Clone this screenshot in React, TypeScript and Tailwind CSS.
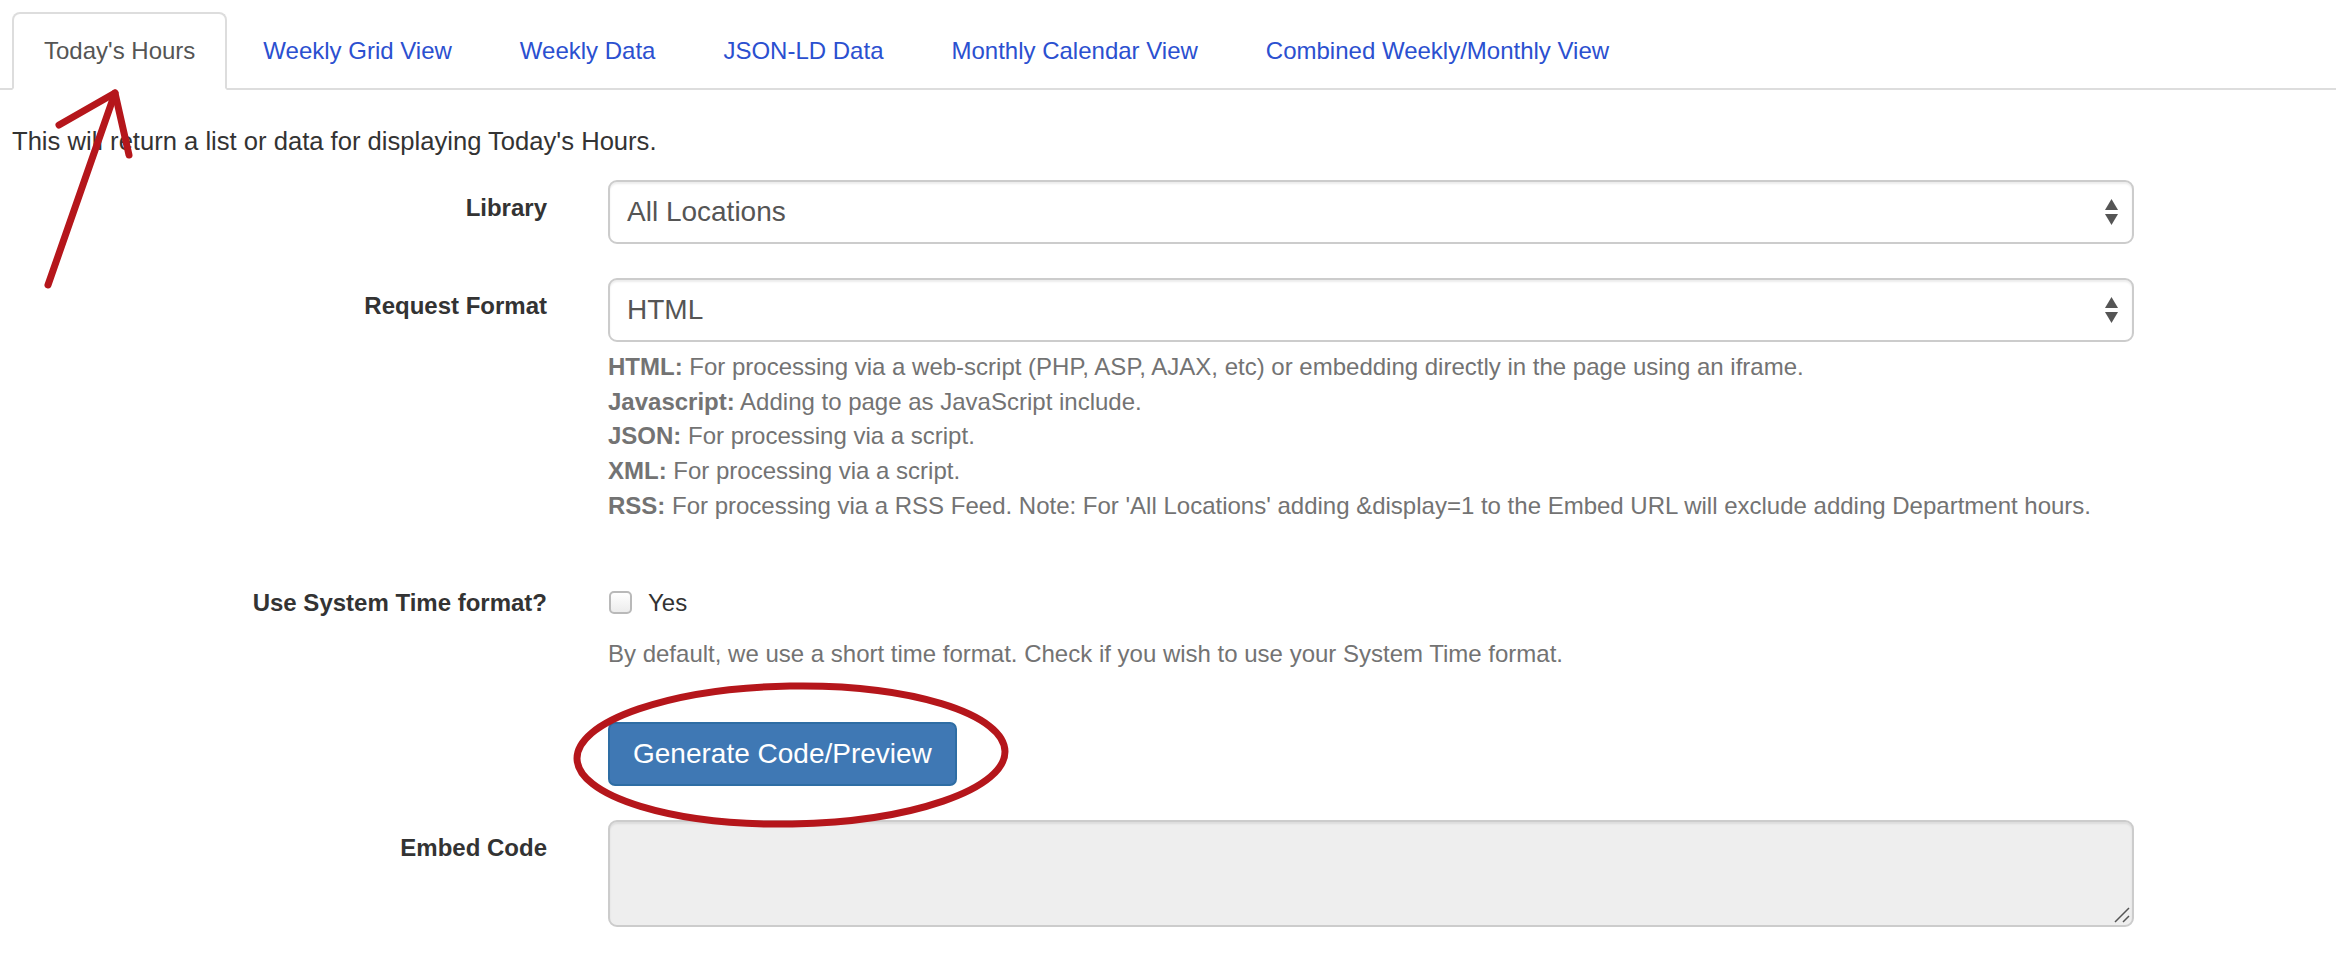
import { useState } from 'react'

const TABS = [
  "Today's Hours",
  'Weekly Grid View',
  'Weekly Data',
  'JSON-LD Data',
  'Monthly Calendar View',
  'Combined Weekly/Monthly View',
]

const FORMATS = [
  { name: 'HTML:', text: 'For processing via a web-script (PHP, ASP, AJAX, etc) or embedding directly in the page using an iframe.' },
  { name: 'Javascript:', text: 'Adding to page as JavaScript include.' },
  { name: 'JSON:', text: 'For processing via a script.' },
  { name: 'XML:', text: 'For processing via a script.' },
  { name: 'RSS:', text: "For processing via a RSS Feed. Note: For 'All Locations' adding &display=1 to the Embed URL will exclude adding Department hours." },
]

function SelectArrows() {
  return (
    <svg width="15" height="28" viewBox="0 0 15 28" className="shrink-0">
      <path d="M7.5 1 L14 12 L1 12 Z" fill="#555" />
      <path d="M1 16 L14 16 L7.5 27 Z" fill="#555" />
    </svg>
  )
}

function FakeSelect({ value }: { value: string }) {
  return (
    <div className="flex h-[64px] w-[1526px] items-center justify-between rounded-[9px] border-2 border-[#cccccc] bg-white pl-[17px] pr-[13px] shadow-[inset_0_2px_2px_rgba(0,0,0,0.075)]">
      <span className="text-[28px] text-[#555]">{value}</span>
      <SelectArrows />
    </div>
  )
}

function Row({ label, children, labelPad = 'pt-[11px]' }: { label: string; children: React.ReactNode; labelPad?: string }) {
  return (
    <div className="flex">
      <div className={`w-[535px] shrink-0 text-right text-[24px] font-bold leading-[33px] text-[#333] ${labelPad}`}>{label}</div>
      <div className="ml-[61px] w-[1526px]">{children}</div>
    </div>
  )
}

export default function App() {
  const [active] = useState(0)
  const [checked, setChecked] = useState(false)

  return (
    <div className="relative min-h-[970px] w-[2336px] overflow-hidden bg-white font-['Liberation_Sans',Arial,sans-serif] text-[#333]">
      {/* Tabs */}
      <ul className="mt-[12px] flex border-b-2 border-[#dddddd] pl-[12px]">
        {TABS.map((t, i) => (
          <li key={t} className="-mb-[2px] mr-[4px]">
            <a
              className={
                i === active
                  ? 'block rounded-t-[8px] border-2 border-[#dddddd] border-b-white bg-white px-[30px] py-[20px] text-[24px] leading-[34px] text-[#555]'
                  : 'block border-2 border-transparent px-[30px] py-[20px] text-[24px] leading-[34px] text-[#2b50d0]'
              }
            >
              {t}
            </a>
          </li>
        ))}
      </ul>

      <p className="mt-[34px] pl-[12px] text-[25.6px] leading-[34px]">This will return a list or data for displaying Today's Hours.</p>

      <div className="mt-[22px] flex flex-col pl-[12px]">
        <Row label="Library">
          <FakeSelect value="All Locations" />
        </Row>

        <div className="mt-[34px]">
          <Row label="Request Format">
            <FakeSelect value="HTML" />
            <div className="mt-[8px] text-[24px] leading-[34.7px] text-[#737373]">
              {FORMATS.map((f) => (
                <div key={f.name}>
                  <b className="font-bold">{f.name}</b> {f.text}
                </div>
              ))}
            </div>
          </Row>
        </div>

        <div className="mt-[62px]">
          <Row label="Use System Time format?" labelPad="pt-0">
            <label className="flex items-center text-[24px] leading-[34px]">
              <span
                onClick={() => setChecked(!checked)}
                className="mr-[16px] ml-[1px] h-[23px] w-[23px] rounded-[5px] border-2 border-[#b9b9b9] bg-gradient-to-b from-white to-[#ececec]"
              />
              <span className="text-[#333]">Yes</span>
            </label>
            <p className="mt-[17px] text-[24px] leading-[34px] text-[#737373]">
              By default, we use a short time format. Check if you wish to use your System Time format.
            </p>
            <button className="mt-[51px] h-[64px] rounded-[7px] border-2 border-[#2e6da4] bg-[#3f78b4] px-[23px] text-[28px] text-white">
              Generate Code/Preview
            </button>
          </Row>
        </div>

        <div className="mt-[34px]">
          <Row label="Embed Code">
            <div className="relative h-[107px] w-[1526px] rounded-[9px] border-2 border-[#cccccc] bg-[#eeeeee] shadow-[inset_0_2px_2px_rgba(0,0,0,0.075)]">
              <svg width="16" height="16" viewBox="0 0 16 16" className="absolute bottom-[2px] right-[2px]">
                <path d="M15 1 L1 15 M15 9 L9 15" stroke="#555" strokeWidth="1.5" />
              </svg>
            </div>
          </Row>
        </div>
      </div>

      {/* red annotations */}
      <svg className="pointer-events-none absolute inset-0" width="2336" height="970" viewBox="0 0 2336 970">
        <g stroke="#b5161b" strokeWidth="7" strokeLinecap="round" fill="none">
          <path d="M48 285 L115 93" />
          <path d="M59 125 L115 93 L129 155" strokeLinejoin="round" />
          <ellipse cx="791" cy="755" rx="214" ry="69" transform="rotate(-1 791 755)" />
        </g>
      </svg>
    </div>
  )
}
